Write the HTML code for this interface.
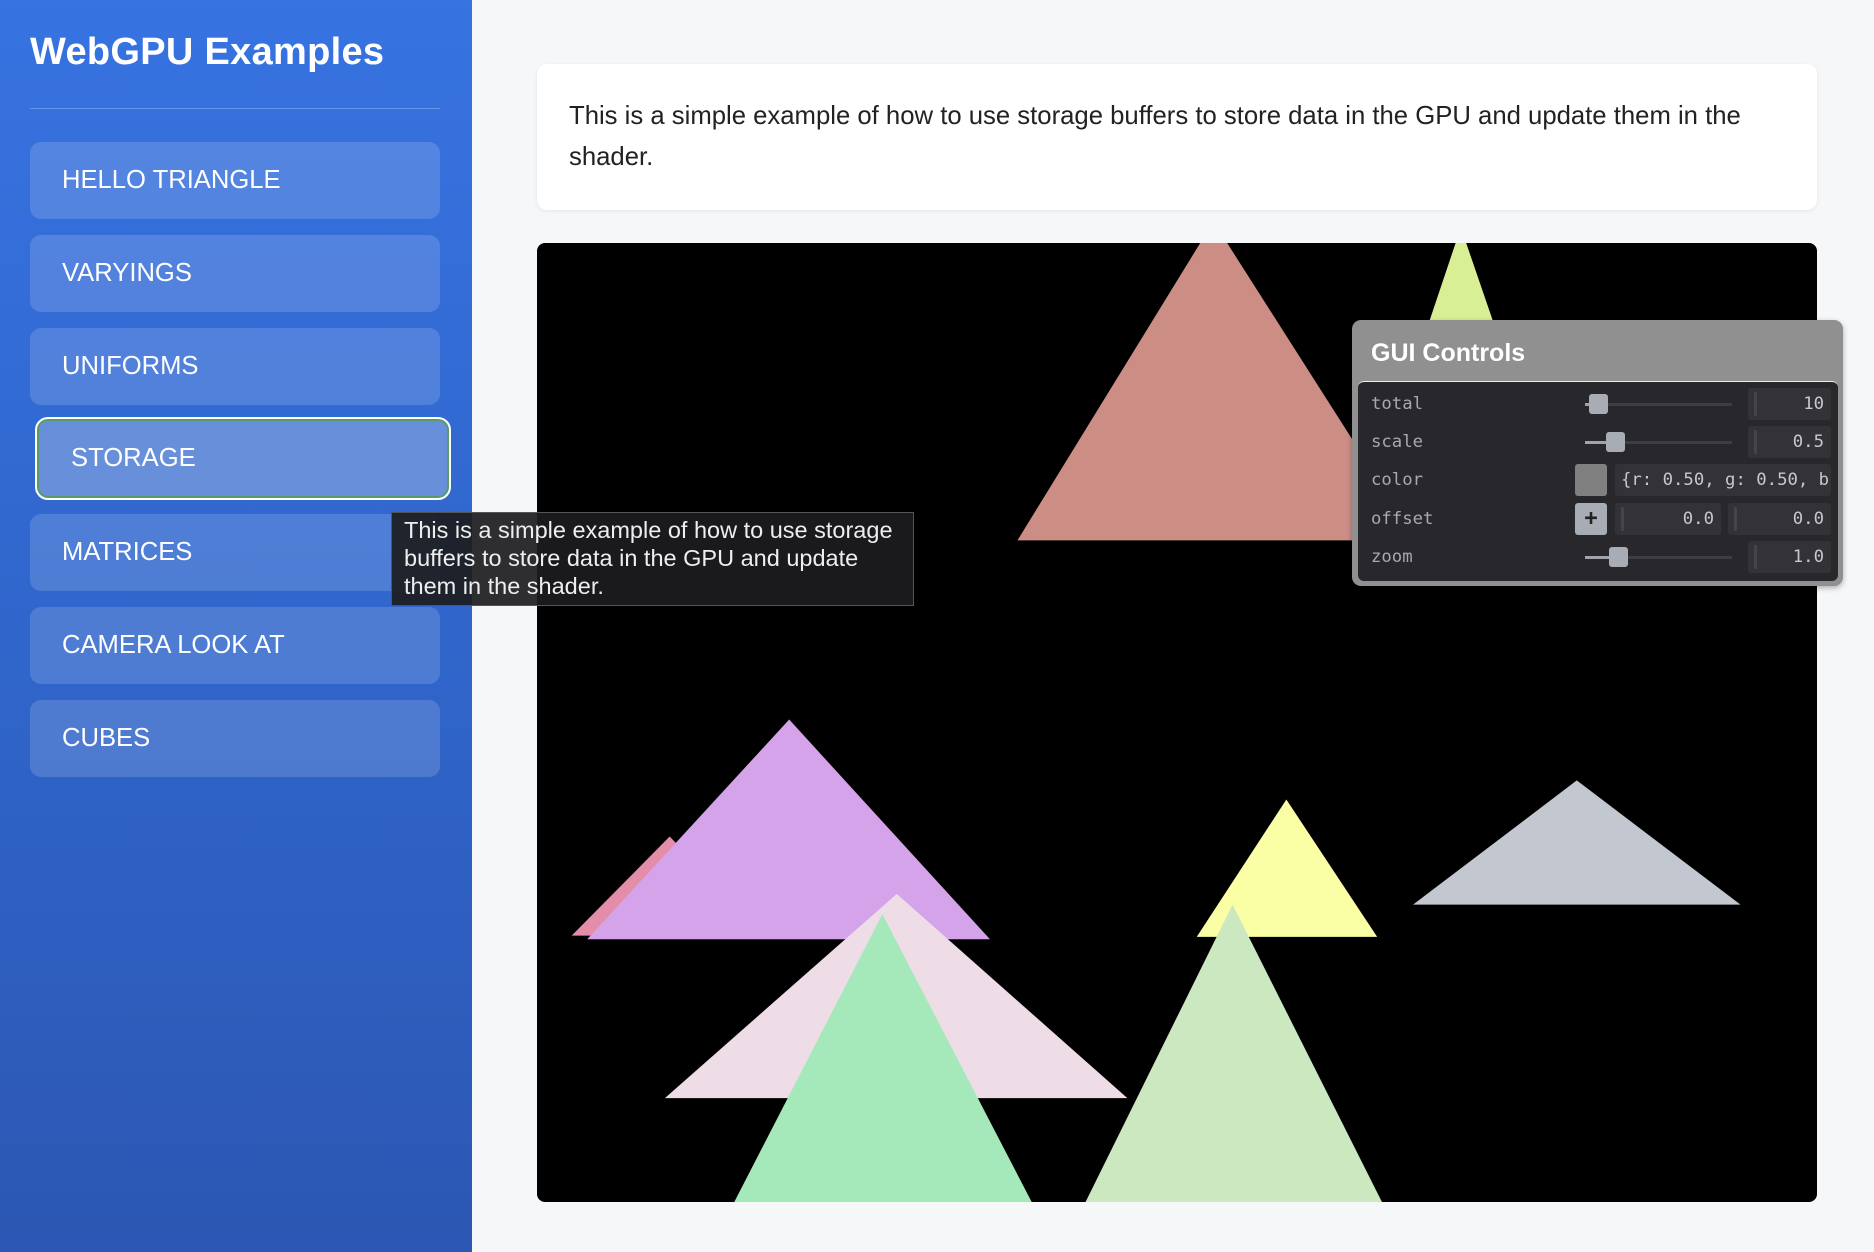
<!DOCTYPE html>
<html><head><meta charset="utf-8"><style>
*{box-sizing:border-box;margin:0;padding:0}
body{width:1874px;height:1252px;overflow:hidden;background:#f6f7f9;font-family:"Liberation Sans",sans-serif;position:relative}
#side{position:absolute;left:0;top:0;width:472px;height:1252px;background:linear-gradient(180deg,#3773e1 0%,#3066cc 50%,#2c57b3 100%)}
#side h1{position:absolute;left:30px;top:31px;color:#fff;font-size:38px;font-weight:bold;letter-spacing:0.3px}
#side .hr{position:absolute;left:30px;top:108px;width:410px;height:1px;background:rgba(255,255,255,0.25)}
.btn{position:absolute;left:30px;width:410px;height:77px;border-radius:11px;background:rgba(255,255,255,0.15);color:#fff;font-size:25.6px;line-height:77px;padding-left:32px}
.sel{left:35px;width:416px;height:83px;line-height:79px;padding-left:34px;background:#6890da;border:2px solid #fff;box-shadow:inset 0 0 0 2px #5a9a68;border-radius:13px}
#card{position:absolute;left:537px;top:64px;width:1280px;height:146px;background:#fff;border-radius:10px;box-shadow:0 1px 4px rgba(0,0,0,0.08);padding:32px 32px;font-size:25.7px;line-height:41px;color:#222}
#cv{position:absolute;left:537px;top:243px;width:1280px;height:959px;border-radius:8px;overflow:hidden;background:#000}
#tip{position:absolute;left:391px;top:512px;width:523px;height:94px;background:rgba(28,28,30,0.92);border:1px solid #555;color:#eee;font-size:23.5px;line-height:28px;padding:3px 12px;white-space:nowrap}
#gui{position:absolute;left:1352px;top:320px;width:491px;height:266px;background:#909090;border-radius:9px;box-shadow:0 2px 6px rgba(0,0,0,0.3)}
#gui .t{position:absolute;left:19px;top:19px;color:#fff;font-weight:bold;font-size:25px}
#gui .in{position:absolute;left:6px;top:61px;width:480px;height:200px;background:#28282c;border-radius:6px;border-top:1px solid #eee}
.row{position:absolute;left:0;width:480px;height:38px;font-family:"DejaVu Sans Mono","Liberation Mono",monospace;font-size:17.3px;color:#a8a8ae}
.lab{position:absolute;left:13px;top:9px}
.trk{position:absolute;left:227px;top:18px;width:147px;height:3px;background:#3d3d44}
.fil{position:absolute;left:227px;top:18px;height:3px;background:#a0a3ab}
.knob{position:absolute;top:9px;width:19px;height:20px;background:#a8acb4;border-radius:3px}
.val{position:absolute;top:3px;height:32px;background:#333337;border-radius:3px;text-align:right;padding-right:7px;line-height:32px;color:#c8c8cc}
.bar:before{content:"";position:absolute;left:6px;top:4px;width:3px;height:24px;background:#444449;border-radius:1px}
</style></head><body>
<div id="side">
<h1>WebGPU Examples</h1><div class="hr"></div>
<div class="btn" style="top:142px">HELLO TRIANGLE</div>
<div class="btn" style="top:235px">VARYINGS</div>
<div class="btn" style="top:328px">UNIFORMS</div>
<div class="btn sel" style="top:417px">STORAGE</div>
<div class="btn" style="top:514px">MATRICES</div>
<div class="btn" style="top:607px">CAMERA LOOK AT</div>
<div class="btn" style="top:700px">CUBES</div>
</div>
<div id="card">This is a simple example of how to use storage buffers to store data in the GPU and update them in the shader.</div>
<div id="cv"><svg width="1280" height="959" viewBox="449 203 1071 803" preserveAspectRatio="none">
<polygon points="1015,185 851,452 1185,452" fill="#cc8d85"/>
<polygon points="1222,190 1175,330 1270,330" fill="#d9ef95"/>
<polygon points="560,700 478,783 640,783" fill="#e38da9"/>
<polygon points="660,602 491,786 828,786" fill="#d4a3e9"/>
<polygon points="750,748 556,919 943,919" fill="#eedce6"/>
<polygon points="738,765 612,1010 865,1010" fill="#a5e9bb"/>
<polygon points="1076,669 1001,784 1152,784" fill="#fafea4"/>
<polygon points="1031,757 906,1010 1158,1010" fill="#cbe8c1"/>
<polygon points="1319,653 1182,757 1456,757" fill="#c3c8d0"/>
</svg></div>
<div id="tip">This is a simple example of how to use storage<br>buffers to store data in the GPU and update<br>them in the shader.</div>
<div id="gui"><div class="t">GUI Controls</div>
<div class="in">
<div class="row" style="top:3px"><span class="lab">total</span><div class="trk"></div><div class="fil" style="width:6px"></div><div class="knob" style="left:231px"></div><div class="val bar" style="left:390px;width:83px">10</div></div>
<div class="row" style="top:41px"><span class="lab">scale</span><div class="trk"></div><div class="fil" style="width:25px"></div><div class="knob" style="left:248px"></div><div class="val bar" style="left:390px;width:83px">0.5</div></div>
<div class="row" style="top:79px"><span class="lab">color</span><div style="position:absolute;left:217px;top:3px;width:32px;height:32px;background:#808080;border-radius:3px"></div><div class="val" style="left:257px;width:216px;text-align:left;padding-left:6px;overflow:hidden;white-space:nowrap">{r: 0.50, g: 0.50, b</div></div>
<div class="row" style="top:118px"><span class="lab">offset</span><div style="position:absolute;left:217px;top:3px;width:32px;height:32px;background:#a8acb4;border-radius:3px;color:#222;font-weight:bold;font-size:22px;text-align:center;line-height:31px">+</div><div class="val bar" style="left:257px;width:106px">0.0</div><div class="val bar" style="left:370px;width:103px">0.0</div></div>
<div class="row" style="top:156px"><span class="lab">zoom</span><div class="trk"></div><div class="fil" style="width:28px"></div><div class="knob" style="left:251px"></div><div class="val bar" style="left:390px;width:83px">1.0</div></div>
</div></div>
</body></html>
